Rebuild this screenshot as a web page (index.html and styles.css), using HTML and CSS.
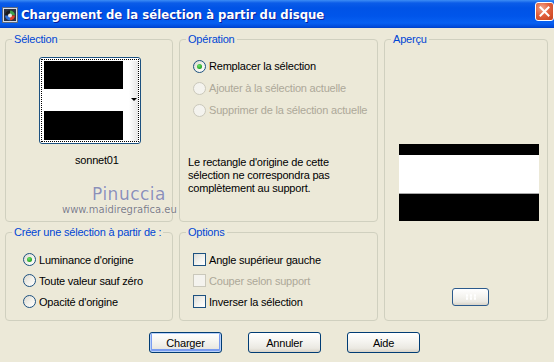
FILE: index.html
```html
<!DOCTYPE html>
<html lang="fr">

<head>
    <meta charset="UTF-8">
    <meta name="viewport" content="width=device-width, initial-scale=1.0">
    <title>Chargement de la sélection à partir du disque</title>
    <link rel="stylesheet" href="styles.css">
</head>

<body>
    <div class="titlebar">
        <svg class="app-icon" width="16" height="16" viewBox="0 0 16 16">
            <rect x="0.5" y="0.5" width="15" height="15" fill="#d8dde6" stroke="#5d6b80"/>
            <rect x="2" y="2" width="12" height="12" fill="#2a3142"/>
            <circle cx="8" cy="8.5" r="5" fill="#1b1b1b"/>
            <path d="M8 3.5 A5 5 0 0 1 13 8.5 L8 8.5 Z" fill="#3fa34d"/>
            <path d="M13 8.5 A5 5 0 0 1 8 13.5 L8 8.5 Z" fill="#d9402b"/>
            <path d="M8 13.5 A5 5 0 0 1 3 8.5 L8 8.5 Z" fill="#2d6fd6"/>
            <circle cx="8" cy="8.5" r="2" fill="#e9e9e9"/>
        </svg>
        <span class="title">Chargement de la sélection à partir du disque</span>
        <span class="close">
            <svg width="19" height="19" viewBox="0 0 19 19">
                <path d="M5.5 5.5 L13.5 13.5 M13.5 5.5 L5.5 13.5" stroke="#fff" stroke-width="2" stroke-linecap="square"/>
            </svg>
        </span>
    </div>

    <div class="dialog">
        <div class="groups">
            <fieldset class="group sel">
                <legend>Sélection</legend>
                <div class="thumb">
                    <div class="thumb-focus">
                        <div class="thumb-image">
                            <div class="band black top-band"></div>
                            <div class="band white mid-band"></div>
                            <div class="band black low-band"></div>
                        </div>
                        <div class="thumb-drop"><span class="arrow"></span></div>
                    </div>
                </div>
                <div class="thumb-name">sonnet01</div>
            </fieldset>

            <fieldset class="group op">
                <legend>Opération</legend>
                <div class="choice-list wide">
                    <div class="choice"><span class="radio checked"></span>Remplacer la sélection</div>
                    <div class="choice disabled"><span class="radio"></span>Ajouter à la sélection actuelle</div>
                    <div class="choice disabled"><span class="radio"></span>Supprimer de la sélection actuelle</div>
                </div>
                <p class="note">Le rectangle d'origine de cette sélection ne correspondra pas complètement au support.</p>
            </fieldset>

            <fieldset class="group pre">
                <legend>Aperçu</legend>
                <div class="preview">
                    <div class="band black" style="height: 11px"></div>
                    <div class="band white" style="height: 38px"></div>
                    <div class="band grey-line"></div>
                    <div class="band black" style="height: 27px"></div>
                </div>
                <button class="btn small-btn"><span class="dots"></span></button>
            </fieldset>

            <fieldset class="group cre">
                <legend>Créer une sélection à partir de :</legend>
                <div class="choice-list">
                    <div class="choice"><span class="radio checked"></span>Luminance d'origine</div>
                    <div class="choice"><span class="radio"></span>Toute valeur sauf zéro</div>
                    <div class="choice"><span class="radio"></span>Opacité d'origine</div>
                </div>
            </fieldset>

            <fieldset class="group opt">
                <legend>Options</legend>
                <div class="choice-list">
                    <div class="choice"><span class="check"></span>Angle supérieur gauche</div>
                    <div class="choice disabled"><span class="check"></span>Couper selon support</div>
                    <div class="choice"><span class="check"></span>Inverser la sélection</div>
                </div>
            </fieldset>
        </div>

        <div class="buttons">
            <button class="btn default">Charger</button>
            <button class="btn">Annuler</button>
            <button class="btn">Aide</button>
        </div>

        <div class="watermark">
            <span class="wm-name">Pinuccia</span>
            <span class="wm-site">www.maidiregrafica.eu</span>
        </div>
    </div>
</body>

</html>
```

FILE: styles.css
```css
* {
    margin: 0;
    padding: 0;
    box-sizing: border-box;
}

body {
    background: #ECE9D8;
    font-family: "Liberation Sans", Arial, sans-serif;
    font-size: 11px;
    letter-spacing: -0.2px;
    color: #000;
    width: 554px;
    height: 362px;
    overflow: hidden;
}

/* title bar */
.titlebar {
    height: 28px;
    display: flex;
    align-items: center;
    padding-left: 2px;
    background: linear-gradient(#3d8df5 0, #0b5ce8 3px, #0053e6 8px, #0055ea 16px, #0760f2 23px, #0049d8 27px, #003fc4 28px);
}

.app-icon {
    flex: none;
    margin-top: 1px;
}

.title {
    margin-left: 3px;
    font-family: "DejaVu Sans Condensed", "DejaVu Sans", sans-serif;
    font-weight: bold;
    font-size: 13px;
    letter-spacing: 0;
    color: #fff;
    text-shadow: 1px 1px 0 #0a1f9c;
    flex: 1;
}

.close {
    width: 19px;
    height: 19px;
    margin-top: -5px;
    border: 1px solid #fff;
    border-radius: 3px;
    background: radial-gradient(circle at 35% 30%, #f2a58e 0, #e2613e 45%, #c4401c 100%);
    display: flex;
    align-items: center;
    justify-content: center;
    flex: none;
}

.close svg {
    display: block;
    margin: -1px;
}

/* dialog body */
.dialog {
    position: relative;
    padding: 5px 0 0 5px;
}

.groups {
    display: grid;
    grid-template-columns: 168px 199px 164px;
    grid-template-rows: 189px 95px;
    grid-template-areas:
        "sel op pre"
        "cre opt pre";
    column-gap: 6px;
    row-gap: 4px;
}

.group {
    min-width: 0;
    border: 1px solid #D0D0BF;
    border-radius: 4px;
    padding: 0 6px;
}

.group legend {
    padding: 0 2px;
    line-height: 13px;
    color: #0046D5;
    white-space: nowrap;
}

.sel { grid-area: sel; }
.op { grid-area: op; }
.pre { grid-area: pre; }
.cre { grid-area: cre; }
.opt { grid-area: opt; }

/* selection thumbnail */
.thumb {
    width: 102px;
    height: 87px;
    margin: 11px 0 0 27px;
    border: 1px solid #1C5180;
    border-radius: 3px;
    background: #fff;
    padding: 1px;
}

.thumb-focus {
    height: 100%;
    border: 1px dotted #000;
    display: flex;
    padding: 1px 0 0 2px;
}

.thumb-image {
    width: 79px;
    display: flex;
    flex-direction: column;
}

.top-band { height: 28px; }
.mid-band { height: 22px; }
.low-band { height: 29px; }

.thumb-drop {
    flex: 1;
    position: relative;
    background: linear-gradient(90deg, #fff 0, #fff 40%, #e6e6e6 100%);
}

.thumb-drop .arrow {
    position: absolute;
    right: 1px;
    top: 37px;
    border-left: 3px solid transparent;
    border-right: 3px solid transparent;
    border-top: 3px solid #000;
}

.band.black { background: #000; }
.band.white { background: #fff; }
.band.grey-line { height: 1px; background: #a9a9a9; }

.thumb-name {
    margin: 10px 0 0 63px;
    line-height: 13px;
}

/* radio and check lists */
.choice-list {
    margin: 9px 0 0 7px;
    display: flex;
    flex-direction: column;
}

.choice-list.wide .choice {
    height: 22px;
}

.cre .choice-list {
    margin: 10px 0 0 11px;
}

.opt .choice-list {
    margin: 10px 0 0 7px;
}

.choice {
    height: 21px;
    display: flex;
    align-items: center;
    white-space: nowrap;
}

.choice.disabled {
    color: #ACA899;
}

.radio {
    width: 13px;
    height: 13px;
    margin-right: 3px;
    border: 1px solid #1C5180;
    border-radius: 50%;
    background: linear-gradient(135deg, #dcd9cf 0, #f3f2ec 55%, #fff 100%);
    display: flex;
    align-items: center;
    justify-content: center;
    flex: none;
}

.radio.checked::after {
    content: "";
    width: 5px;
    height: 5px;
    border-radius: 50%;
    background: radial-gradient(circle at 40% 35%, #6fe36b 0, #21a121 70%);
}

.check {
    width: 13px;
    height: 13px;
    margin-right: 3px;
    border: 1px solid #1C5180;
    background: linear-gradient(135deg, #dcdcd7 0, #f3f3ef 55%, #fff 100%);
    flex: none;
}

.disabled .radio,
.disabled .check {
    border-color: #CAC8BB;
    background: #f4f3ee;
}

.note {
    margin: 35px 0 0 2px;
    line-height: 13px;
    width: 180px;
}

/* preview */
.preview {
    width: 140px;
    margin: 98px 0 0 8px;
    display: flex;
    flex-direction: column;
}

/* buttons */
.buttons {
    margin-top: 11px;
    padding-left: 144px;
    display: flex;
    gap: 26px;
}

.btn {
    width: 73px;
    height: 21px;
    border: 1px solid #003C74;
    border-radius: 3px;
    background: linear-gradient(#fff 0, #f5f4f0 45%, #ebe9e2 80%, #d8d3c8 100%);
    font-family: "Liberation Sans", Arial, sans-serif;
    font-size: 11px;
    letter-spacing: -0.2px;
    color: #000;
}

.btn.default {
    box-shadow: inset 0 0 0 1px #b9d1fa, inset 0 -1px 0 2px #7a9cf0;
}

.btn.small-btn {
    width: 37px;
    height: 18px;
    margin: 67px 0 0 61px;
    border-color: #2b5a8c;
    display: flex;
    align-items: center;
    justify-content: center;
}

.dots {
    width: 12px;
    height: 6px;
    background:
        radial-gradient(circle, #fff 1px, transparent 1.5px) 0 0 / 4px 3px;
}

/* watermark over the dialog */
.watermark {
    position: absolute;
    left: 0;
    top: 0;
}

.wm-name {
    position: absolute;
    left: 92px;
    top: 156px;
    font-family: "DejaVu Sans", sans-serif;
    font-size: 17px;
    line-height: 20px;
    letter-spacing: 0.5px;
    color: #8c90b6;
    text-shadow: 0 0 1px #fff;
    white-space: nowrap;
}

.wm-site {
    position: absolute;
    left: 62px;
    top: 176px;
    font-family: "DejaVu Sans", sans-serif;
    font-size: 10px;
    line-height: 12px;
    letter-spacing: 0;
    color: #7d7d85;
    text-shadow: 0 0 1px #fff;
    white-space: nowrap;
}
```
